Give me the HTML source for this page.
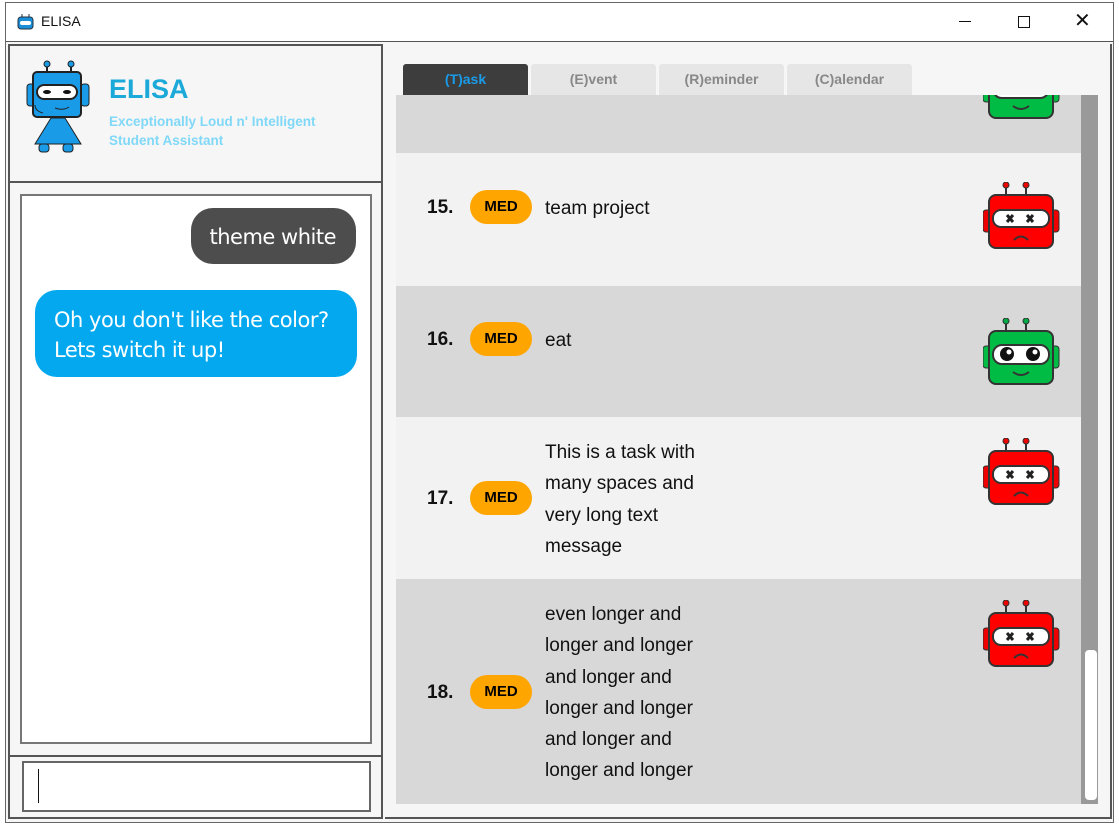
<!DOCTYPE html>
<html><head><meta charset="utf-8"><style>
*{margin:0;padding:0;box-sizing:border-box}
body{width:1119px;height:826px;background:#fff;position:relative;overflow:hidden;font-family:"Liberation Sans",sans-serif}
.a{position:absolute}
.row{position:absolute;left:396px;width:685px}
.num{position:absolute;left:427px;font-size:19px;font-weight:bold;color:#111}
.med{position:absolute;left:470px;width:62px;height:34px;border-radius:17px;background:#ffa500;font-weight:bold;font-size:15px;text-align:center;line-height:34px;color:#000}
.txt{position:absolute;left:545px;font-size:19px;line-height:31.3px;color:#111}
.tab{position:absolute;top:64px;height:31px;width:125px;border-radius:3px 3px 0 0;background:#e6e6e6;color:#888;font-weight:bold;font-size:14px;text-align:center;line-height:30px}
</style></head><body>
<svg width="0" height="0" style="position:absolute">
<symbol id="red" viewBox="0 0 80 70"><line x1="23" y1="4" x2="23" y2="14" stroke="#333" stroke-width="2"/><line x1="43" y1="4" x2="43" y2="14" stroke="#333" stroke-width="2"/><circle cx="23" cy="3" r="3" fill="#e00" stroke="#333"/><circle cx="43" cy="3" r="3" fill="#e00" stroke="#333"/><rect x="0" y="28" width="8" height="22" rx="3" fill="#e00" stroke="#333"/><rect x="68" y="28" width="8" height="22" rx="3" fill="#e00" stroke="#333"/><rect x="6" y="13" width="64" height="53" rx="7" fill="#f00" stroke="#333" stroke-width="2"/><rect x="10" y="28" width="56" height="17" rx="8" fill="#fff" stroke="#333" stroke-width="2"/><path d="M24 33l6 7M30 33l-6 7M44 33l6 7M50 33l-6 7" stroke="#222" stroke-width="3"/><path d="M31 58q7-7 14 0" stroke="#333" stroke-width="2" fill="none"/></symbol>
<symbol id="grn" viewBox="0 0 80 70"><line x1="23" y1="4" x2="23" y2="14" stroke="#333" stroke-width="2"/><line x1="43" y1="4" x2="43" y2="14" stroke="#333" stroke-width="2"/><circle cx="23" cy="3" r="3" fill="#0a4" stroke="#333"/><circle cx="43" cy="3" r="3" fill="#0a4" stroke="#333"/><rect x="0" y="28" width="8" height="22" rx="3" fill="#0b4" stroke="#333"/><rect x="68" y="28" width="8" height="22" rx="3" fill="#0b4" stroke="#333"/><rect x="6" y="13" width="64" height="53" rx="7" fill="#0b4" stroke="#333" stroke-width="2"/><rect x="10" y="27" width="56" height="19" rx="9" fill="#fff" stroke="#333" stroke-width="2"/><circle cx="24" cy="36" r="7" fill="#111"/><circle cx="50" cy="36" r="7" fill="#111"/><circle cx="26" cy="34" r="2.5" fill="#fff"/><circle cx="52" cy="34" r="2.5" fill="#fff"/><path d="M30 54q8 6 16 0" stroke="#333" stroke-width="2" fill="none"/></symbol>
</svg>
<div class="a" style="left:5px;top:2px;width:1109px;height:821px;border:1px solid #666;background:#f6f6f6"></div>
<div class="a" style="left:6px;top:3px;width:1107px;height:39px;background:#fff;border-bottom:1px solid #555"></div>
<svg class="a" style="left:16px;top:13px" width="19" height="17" viewBox="0 0 19 17"><rect x="2" y="4" width="15" height="12" rx="3" fill="#1a8fd8" stroke="#234"/><rect x="4" y="8" width="11" height="4" rx="2" fill="#fff"/><line x1="6" y1="1" x2="6" y2="4" stroke="#234"/><line x1="13" y1="1" x2="13" y2="4" stroke="#234"/></svg>
<div class="a" style="left:41px;top:13px;font-size:14px;color:#111">ELISA</div>
<div class="a" style="left:959px;top:21px;width:12px;height:1px;background:#111"></div>
<div class="a" style="left:1018px;top:16px;width:12px;height:12px;border:1px solid #111"></div>
<div class="a" style="left:1074px;top:8px;font-size:20px;color:#111">✕</div>
<div class="a" style="left:8px;top:44px;width:375px;height:775px;border:2px solid #555;background:#f6f6f6"></div>
<div class="a" style="left:8px;top:181px;width:375px;height:2px;background:#555"></div>
<div class="a" style="left:8px;top:755px;width:375px;height:2px;background:#555"></div>
<svg class="a" style="left:25px;top:60px" width="70" height="95" viewBox="0 0 70 95"><line x1="22" y1="4" x2="22" y2="12" stroke="#222" stroke-width="2"/><line x1="46" y1="4" x2="46" y2="12" stroke="#222" stroke-width="2"/><circle cx="22" cy="4" r="3" fill="#1a9be8" stroke="#222"/><circle cx="46" cy="4" r="3" fill="#1a9be8" stroke="#222"/><rect x="2" y="24" width="8" height="22" rx="3" fill="#1a9be8" stroke="#222"/><rect x="56" y="24" width="8" height="22" rx="3" fill="#1a9be8" stroke="#222"/><path d="M26 58L10 84h46L40 58z" fill="#1a9be8" stroke="#222"/><rect x="14" y="84" width="10" height="8" rx="3" fill="#1a9be8" stroke="#222"/><rect x="38" y="84" width="10" height="8" rx="3" fill="#1a9be8" stroke="#222"/><rect x="8" y="12" width="48" height="45" rx="4" fill="#1a9be8" stroke="#222" stroke-width="2"/><rect x="12" y="25" width="40" height="14" rx="7" fill="#fff" stroke="#222" stroke-width="2"/><ellipse cx="22" cy="32" rx="4" ry="2" fill="#111"/><ellipse cx="42" cy="32" rx="4" ry="2" fill="#111"/><path d="M30 48q8 3 14-1" stroke="#222" fill="none"/><path d="M10 45q0 6 8 8" stroke="#222" fill="none"/></svg>
<div class="a" style="left:109px;top:74px;font-size:27px;font-weight:bold;color:#1aa9d9">ELISA</div>
<div class="a" style="left:109px;top:112px;font-size:13.5px;font-weight:bold;color:#80d8f8;line-height:19px">Exceptionally Loud n' Intelligent<br>Student Assistant</div>
<div class="a" style="left:20px;top:194px;width:352px;height:550px;border:2px solid #777;background:#fff"></div>
<div class="a" style="left:191px;top:208px;width:165px;height:56px;border-radius:22px;background:#4d4d4d;color:#fff;font-size:21px;line-height:58px;text-align:right;padding-right:20px;font-family:'Comic Sans MS','DejaVu Sans',sans-serif;letter-spacing:-0.5px">theme white</div>
<div class="a" style="left:35px;top:290px;width:322px;height:87px;border-radius:22px;background:#03a8ef;color:#fff;font-size:21px;line-height:30px;padding:15px 0 0 19px;font-family:'Comic Sans MS','DejaVu Sans',sans-serif;letter-spacing:-0.5px">Oh you don't like the color?<br>Lets switch it up!</div>
<div class="a" style="left:22px;top:761px;width:349px;height:51px;border:2px solid #666;background:#fff"></div>
<div class="a" style="left:38px;top:769px;width:1px;height:34px;background:#111"></div>
<div class="a" style="left:385px;top:44px;width:727px;height:775px;border-right:2px solid #555;border-bottom:2px solid #555;background:#f6f6f6"></div>
<div class="tab" style="left:403px;background:#3d3d3d;color:#1a9be8">(T)ask</div>
<div class="tab" style="left:531px">(E)vent</div>
<div class="tab" style="left:659px">(R)eminder</div>
<div class="tab" style="left:787px">(C)alendar</div>
<div class="a" style="left:1081px;top:95px;width:17px;height:709px;background:#999"></div>
<div class="a" style="left:1085px;top:650px;width:12px;height:150px;border-radius:4px;background:#fff"></div>
<div class="row" style="top:95px;height:58px;background:#d8d8d8;overflow:hidden"><svg style="position:absolute;left:587px;top:-43px" width="80" height="70"><use href="#grn"/></svg></div>
<div class="row" style="top:153px;height:133px;background:#f2f2f2"></div>
<div class="row" style="top:286px;height:131px;background:#d8d8d8"></div>
<div class="row" style="top:417px;height:162px;background:#f2f2f2"></div>
<div class="row" style="top:579px;height:225px;background:#d8d8d8"></div>
<div class="num" style="top:197px">15.</div><div class="med" style="top:190px">MED</div><div class="txt" style="top:193px">team project</div>
<div class="num" style="top:329px">16.</div><div class="med" style="top:322px">MED</div><div class="txt" style="top:325px">eat</div>
<div class="num" style="top:488px">17.</div><div class="med" style="top:481px">MED</div><div class="txt" style="top:437px">This is a task with<br>many spaces and<br>very long text<br>message</div>
<div class="num" style="top:682px">18.</div><div class="med" style="top:675px">MED</div><div class="txt" style="top:599px">even longer and<br>longer and longer<br>and longer and<br>longer and longer<br>and longer and<br>longer and longer</div>
<svg class="a" style="left:983px;top:182px" width="80" height="70"><use href="#red"/></svg>
<svg class="a" style="left:983px;top:318px" width="80" height="70"><use href="#grn"/></svg>
<svg class="a" style="left:983px;top:438px" width="80" height="70"><use href="#red"/></svg>
<svg class="a" style="left:983px;top:600px" width="80" height="70"><use href="#red"/></svg>
</body></html>
